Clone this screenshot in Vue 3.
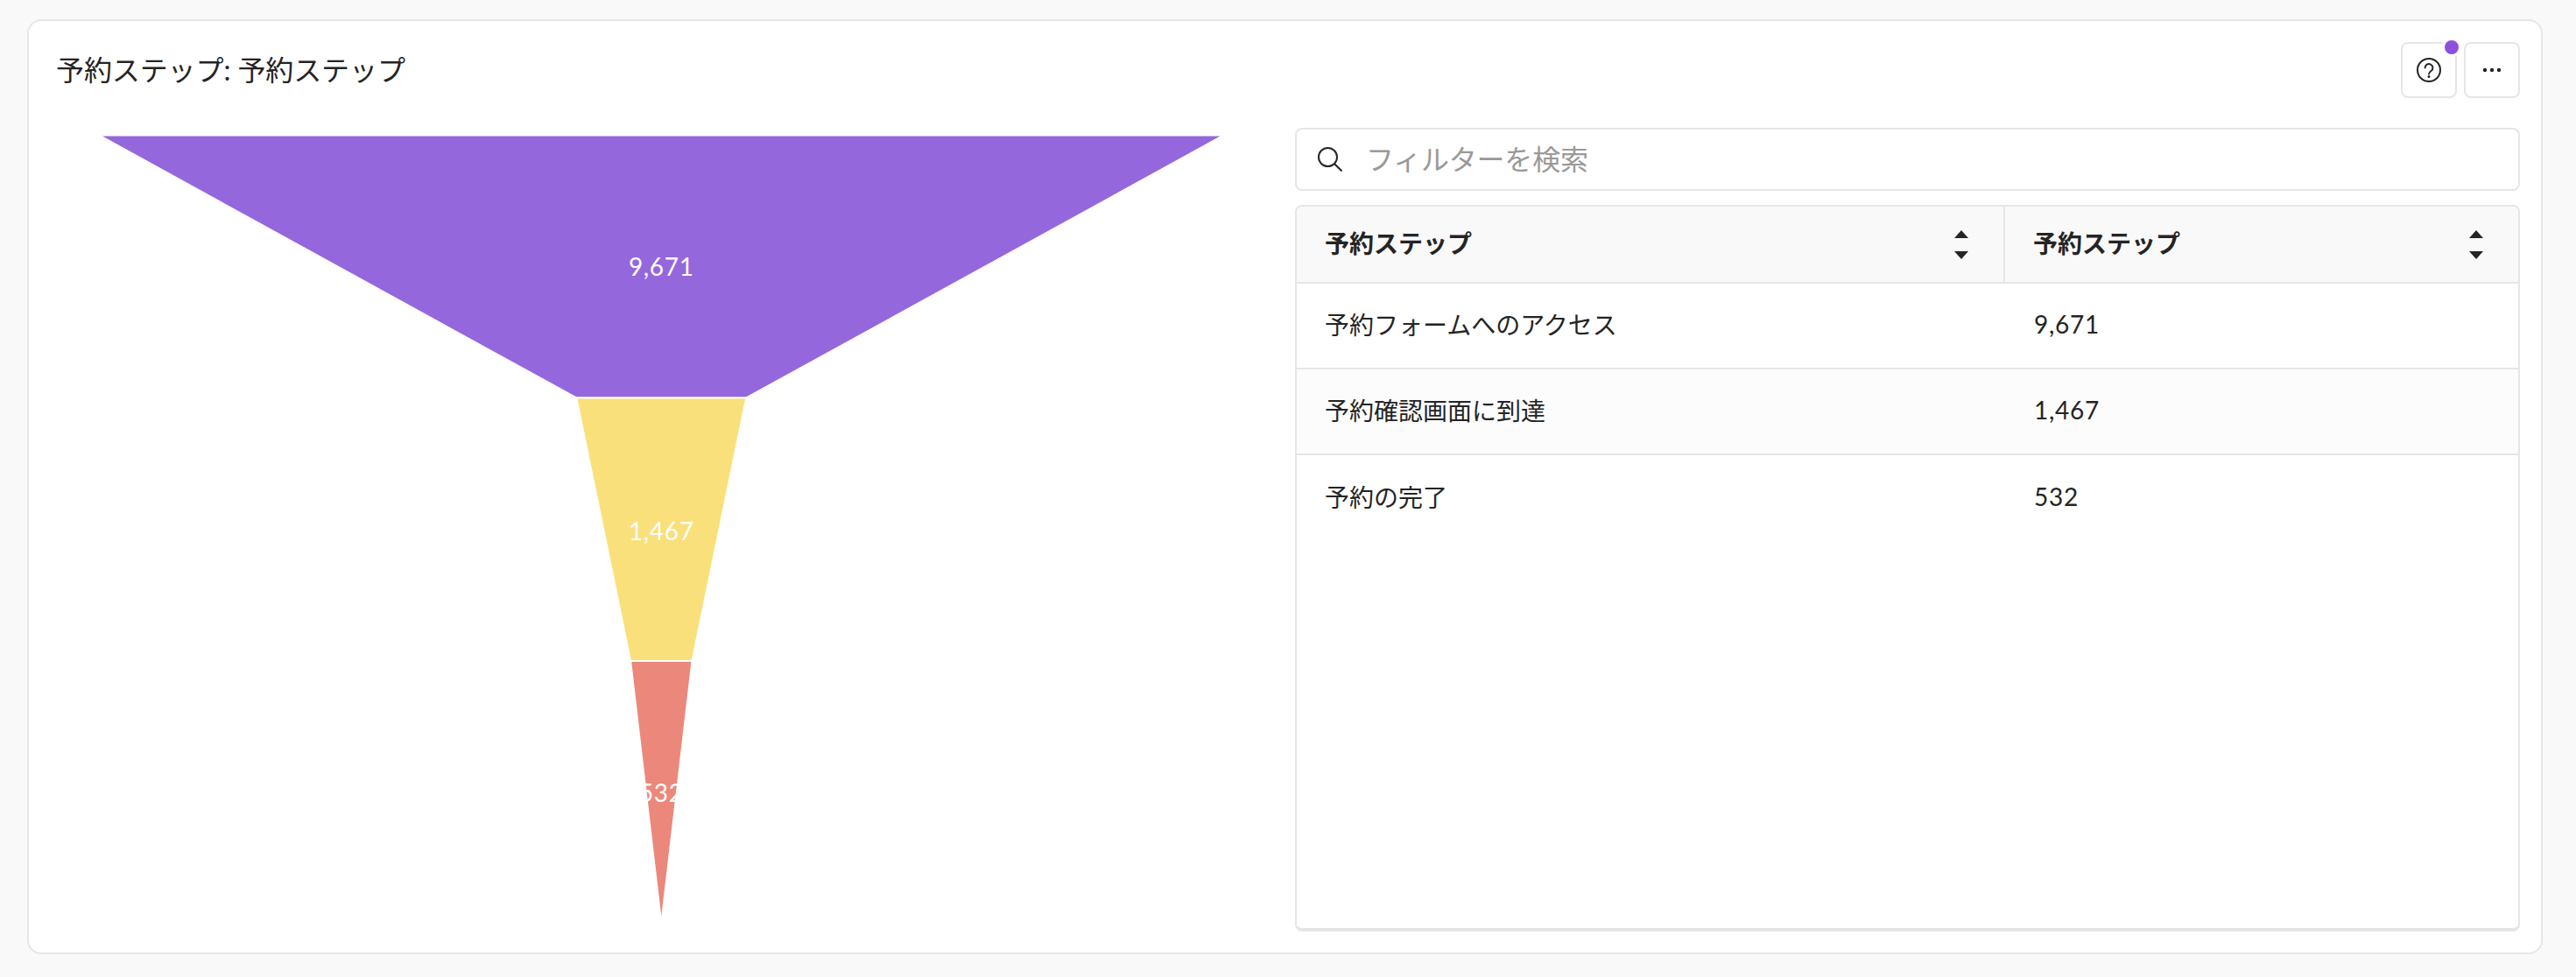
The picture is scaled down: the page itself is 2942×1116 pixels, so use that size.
<script setup>
const columns = ['予約ステップ', '予約ステップ']
const rows = [
  { name: '予約フォームへのアクセス', value: '9,671' },
  { name: '予約確認画面に到達', value: '1,467' },
  { name: '予約の完了', value: '532' },
]
const slices = [
  { points: '113,154.5 1397.6,154.5 852.3,454.5 658.3,454.5', fill: '#9567dc', label: '9,671', y: 315 },
  { points: '658.3,454.5 852.3,454.5 790.5,755 720.1,755', fill: '#f9e07b', label: '1,467', y: 617 },
  { points: '720.1,755 790.5,755 755.3,1055', fill: '#eb887b', label: '532', y: 916 },
]
</script>

<template>
  <div class="page">
    <section class="card">
      <header class="head">
        <h2 class="title">予約ステップ: 予約ステップ</h2>
        <div class="actions">
          <button class="btn">
            <svg width="28" height="28" viewBox="0 0 28 28" fill="none" stroke="#242424" stroke-width="2">
              <circle cx="14" cy="14" r="13" />
              <path d="M9.6 11.4a4.4 4.4 0 1 1 7 3.6c-1.600 1.100-2.600 1.900-2.600 3.600" stroke-linecap="round" />
              <circle cx="14" cy="21.6" r="1.5" fill="#242424" stroke="none" />
            </svg>
            <span class="dot"></span>
          </button>
          <button class="btn">
            <svg width="24" height="8" viewBox="0 0 24 8" fill="#242424">
              <circle cx="4" cy="4" r="2.2" />
              <circle cx="12" cy="4" r="2.2" />
              <circle cx="20" cy="4" r="2.2" />
            </svg>
          </button>
        </div>
      </header>
      <div class="body">
        <div class="chart">
          <svg class="funnel" viewBox="57 146 1422 918" width="1422" height="918">
            <polygon v-for="s in slices" :key="s.label" :points="s.points" :fill="s.fill" stroke="#fff" stroke-width="2" />
            <text v-for="s in slices" :key="s.label + 't'" class="lab" x="755.3" :y="s.y" text-anchor="middle">{{ s.label }}</text>
          </svg>
        </div>
        <div class="panel">
          <div class="search">
            <svg class="glass" width="28" height="28" viewBox="0 0 28 28" fill="none" stroke="#242424" stroke-width="2">
              <circle cx="11.5" cy="11.5" r="10.5" />
              <path d="M19 19l8.500 8.500" />
            </svg>
            <span class="placeholder">フィルターを検索</span>
          </div>
          <div class="table">
            <div class="row head-row">
              <div v-for="(c, i) in columns" :key="i" class="cell th">
                <span class="lift">{{ c }}</span>
                <svg class="sort" width="16" height="33" viewBox="0 0 16 33" fill="#242424">
                  <path d="M0 9L8 0l8 9z" />
                  <path d="M0 24h16l-8 9z" />
                </svg>
              </div>
            </div>
            <div v-for="r in rows" :key="r.name" class="row body-row">
              <div class="cell"><span class="lift">{{ r.name }}</span></div>
              <div class="cell"><span class="lift num">{{ r.value }}</span></div>
            </div>
          </div>
        </div>
      </div>
    </section>
  </div>
</template>

<style>
html, body { background: #f9f9f9; }
</style>

<style scoped>
.page {
  padding: 22px 38px 26px 31px;
  background: #f9f9f9;
  font-family: Lato, "Noto Sans CJK JP", sans-serif;
  color: #242424;
}
.card {
  box-sizing: border-box;
  height: 1068px;
  padding: 24px;
  background: #fff;
  border: 2px solid #e6e6e6;
  border-radius: 16px;
  display: flex;
  flex-direction: column;
  gap: 34px;
}
.head {
  display: flex;
  align-items: center;
  justify-content: space-between;
  height: 64px;
  flex: none;
}
.title {
  margin: 0 0 0 7px;
  font-size: 32px;
  font-weight: 400;
  line-height: 40px;
  letter-spacing: -0.1px;
}
.actions { display: flex; gap: 8px; }
.btn {
  position: relative;
  box-sizing: border-box;
  width: 64px;
  height: 64px;
  padding: 0;
  display: flex;
  align-items: center;
  justify-content: center;
  background: #fff;
  border: 2px solid #e6e6e6;
  border-radius: 8px;
}
.dot {
  position: absolute;
  top: -4px;
  right: -4px;
  width: 16px;
  height: 16px;
  border-radius: 50%;
  background: #8f4fdd;
  box-shadow: 0 0 0 3px #fff;
}
.body {
  flex: 1;
  min-height: 0;
  display: flex;
}
.chart { flex: none; width: 1422px; }
.funnel { display: block; }
.lab { font-family: Lato, sans-serif; font-size: 28px; letter-spacing: 0.7px; fill: #fff; }
.panel {
  flex: 1;
  min-width: 0;
  display: flex;
  flex-direction: column;
  gap: 16px;
}
.search {
  box-sizing: border-box;
  height: 72px;
  flex: none;
  display: flex;
  align-items: center;
  gap: 27px;
  padding-left: 24px;
  border: 2px solid #e6e6e6;
  border-radius: 8px;
}
.glass { flex: none; }
.placeholder { font-size: 32px; letter-spacing: -0.2px; color: #999; padding-bottom: 4px; }
.table {
  box-sizing: border-box;
  flex: 1;
  min-height: 0;
  border: 2px solid #e6e6e6;
  border-bottom-width: 4px;
  border-radius: 8px;
  overflow: hidden;
}
.row {
  display: grid;
  grid-template-columns: 809px 1fr;
  box-sizing: border-box;
  height: 98px;
  border-bottom: 2px solid #e6e6e6;
}
.row:last-child { border-bottom: 0; }
.head-row { height: 88px; background: #f9f9f9; }
.body-row:nth-child(3) { background: #fcfcfc; }
.cell {
  display: flex;
  align-items: center;
  justify-content: space-between;
  padding: 0 32px;
  font-size: 28px;
}
.lift { padding-bottom: 4px; }
.num { letter-spacing: 0.7px; margin-left: 1px; }
.th { font-weight: 700; padding-right: 40px; }
.th:first-child { border-right: 2px solid #e6e6e6; }
.sort { flex: none; }
</style>
